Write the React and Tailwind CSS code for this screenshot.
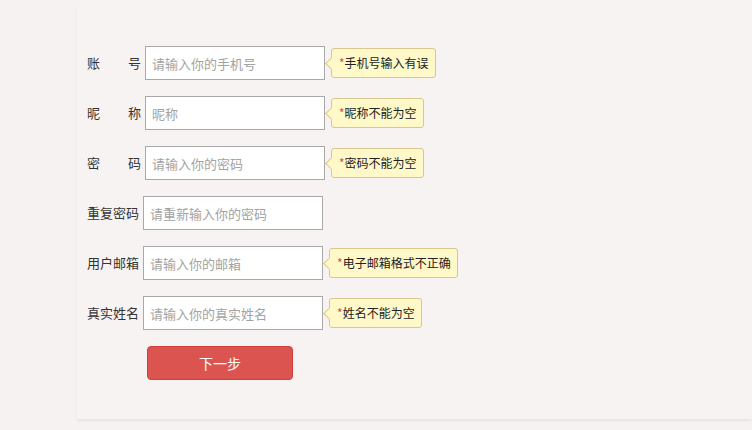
import { useState } from "react"

const rows = [
  { label: "账号", wide: true, placeholder: "请输入你的手机号", tip: "手机号输入有误" },
  { label: "昵称", wide: true, placeholder: "昵称", tip: "昵称不能为空" },
  { label: "密码", wide: true, placeholder: "请输入你的密码", tip: "密码不能为空", type: "password" },
  { label: "重复密码", placeholder: "请重新输入你的密码", type: "password" },
  { label: "用户邮箱", placeholder: "请输入你的邮箱", tip: "电子邮箱格式不正确" },
  { label: "真实姓名", placeholder: "请输入你的真实姓名", tip: "姓名不能为空" },
]

const Tip = ({ text }) => (
  <div className="relative ml-[6px] flex h-[30px] items-center rounded-[3px] border border-[#d8c88e] bg-[#fff8c8] pl-[7px] pr-[6px] text-[12px] text-[#222]">
    <span className="absolute left-[-5px] top-[10px] h-[9px] w-[9px] rotate-45 border-b border-l border-[#d8c88e] bg-[#fff8c8]"></span>
    <span className="relative text-[#e8463c]">*</span>
    <span className="relative">{text}</span>
  </div>
)

const App = () => {
  const [formData, setFormData] = useState({})

  const handleChange = (e) => {
    setFormData({ ...formData, [e.target.name]: e.target.value })
  }

  return (
    <div className="min-h-screen bg-[#f5f2f1] pl-[77px] pt-[6px] font-['Noto_Sans_CJK_SC',sans-serif]">
      <div className="h-[413px] bg-[#f7f3f2] pl-[10px] pt-[40px] shadow-[0_2px_3px_rgba(0,0,0,0.06)]">
        <form className="flex flex-col gap-4">
          {rows.map((row, i) => (
            <div key={i} className="flex items-center">
              <label
                className={
                  row.wide
                    ? "w-[54px] text-justify text-[13px] text-[#333] [text-align-last:justify]"
                    : "text-[13px] text-[#333]"
                }
              >
                {row.label}
              </label>
              <input
                type={row.type || "text"}
                name={"f" + i}
                value={formData["f" + i] || ""}
                onChange={handleChange}
                placeholder={row.placeholder}
                className="ml-1 h-[34px] w-[180px] border border-[#a9a9a9] bg-white pl-[6px] text-[13px] text-[#333] outline-none placeholder:text-[#a3a3a3]"
              />
              {row.tip && <Tip text={row.tip} />}
            </div>
          ))}
          <div className="pl-[60px]">
            <button
              type="button"
              className="h-[34px] w-[146px] rounded-[4px] border border-[#cf3f3a] bg-[#db544f] text-[14px] text-white"
            >
              下一步
            </button>
          </div>
        </form>
      </div>
    </div>
  )
}

export default App
